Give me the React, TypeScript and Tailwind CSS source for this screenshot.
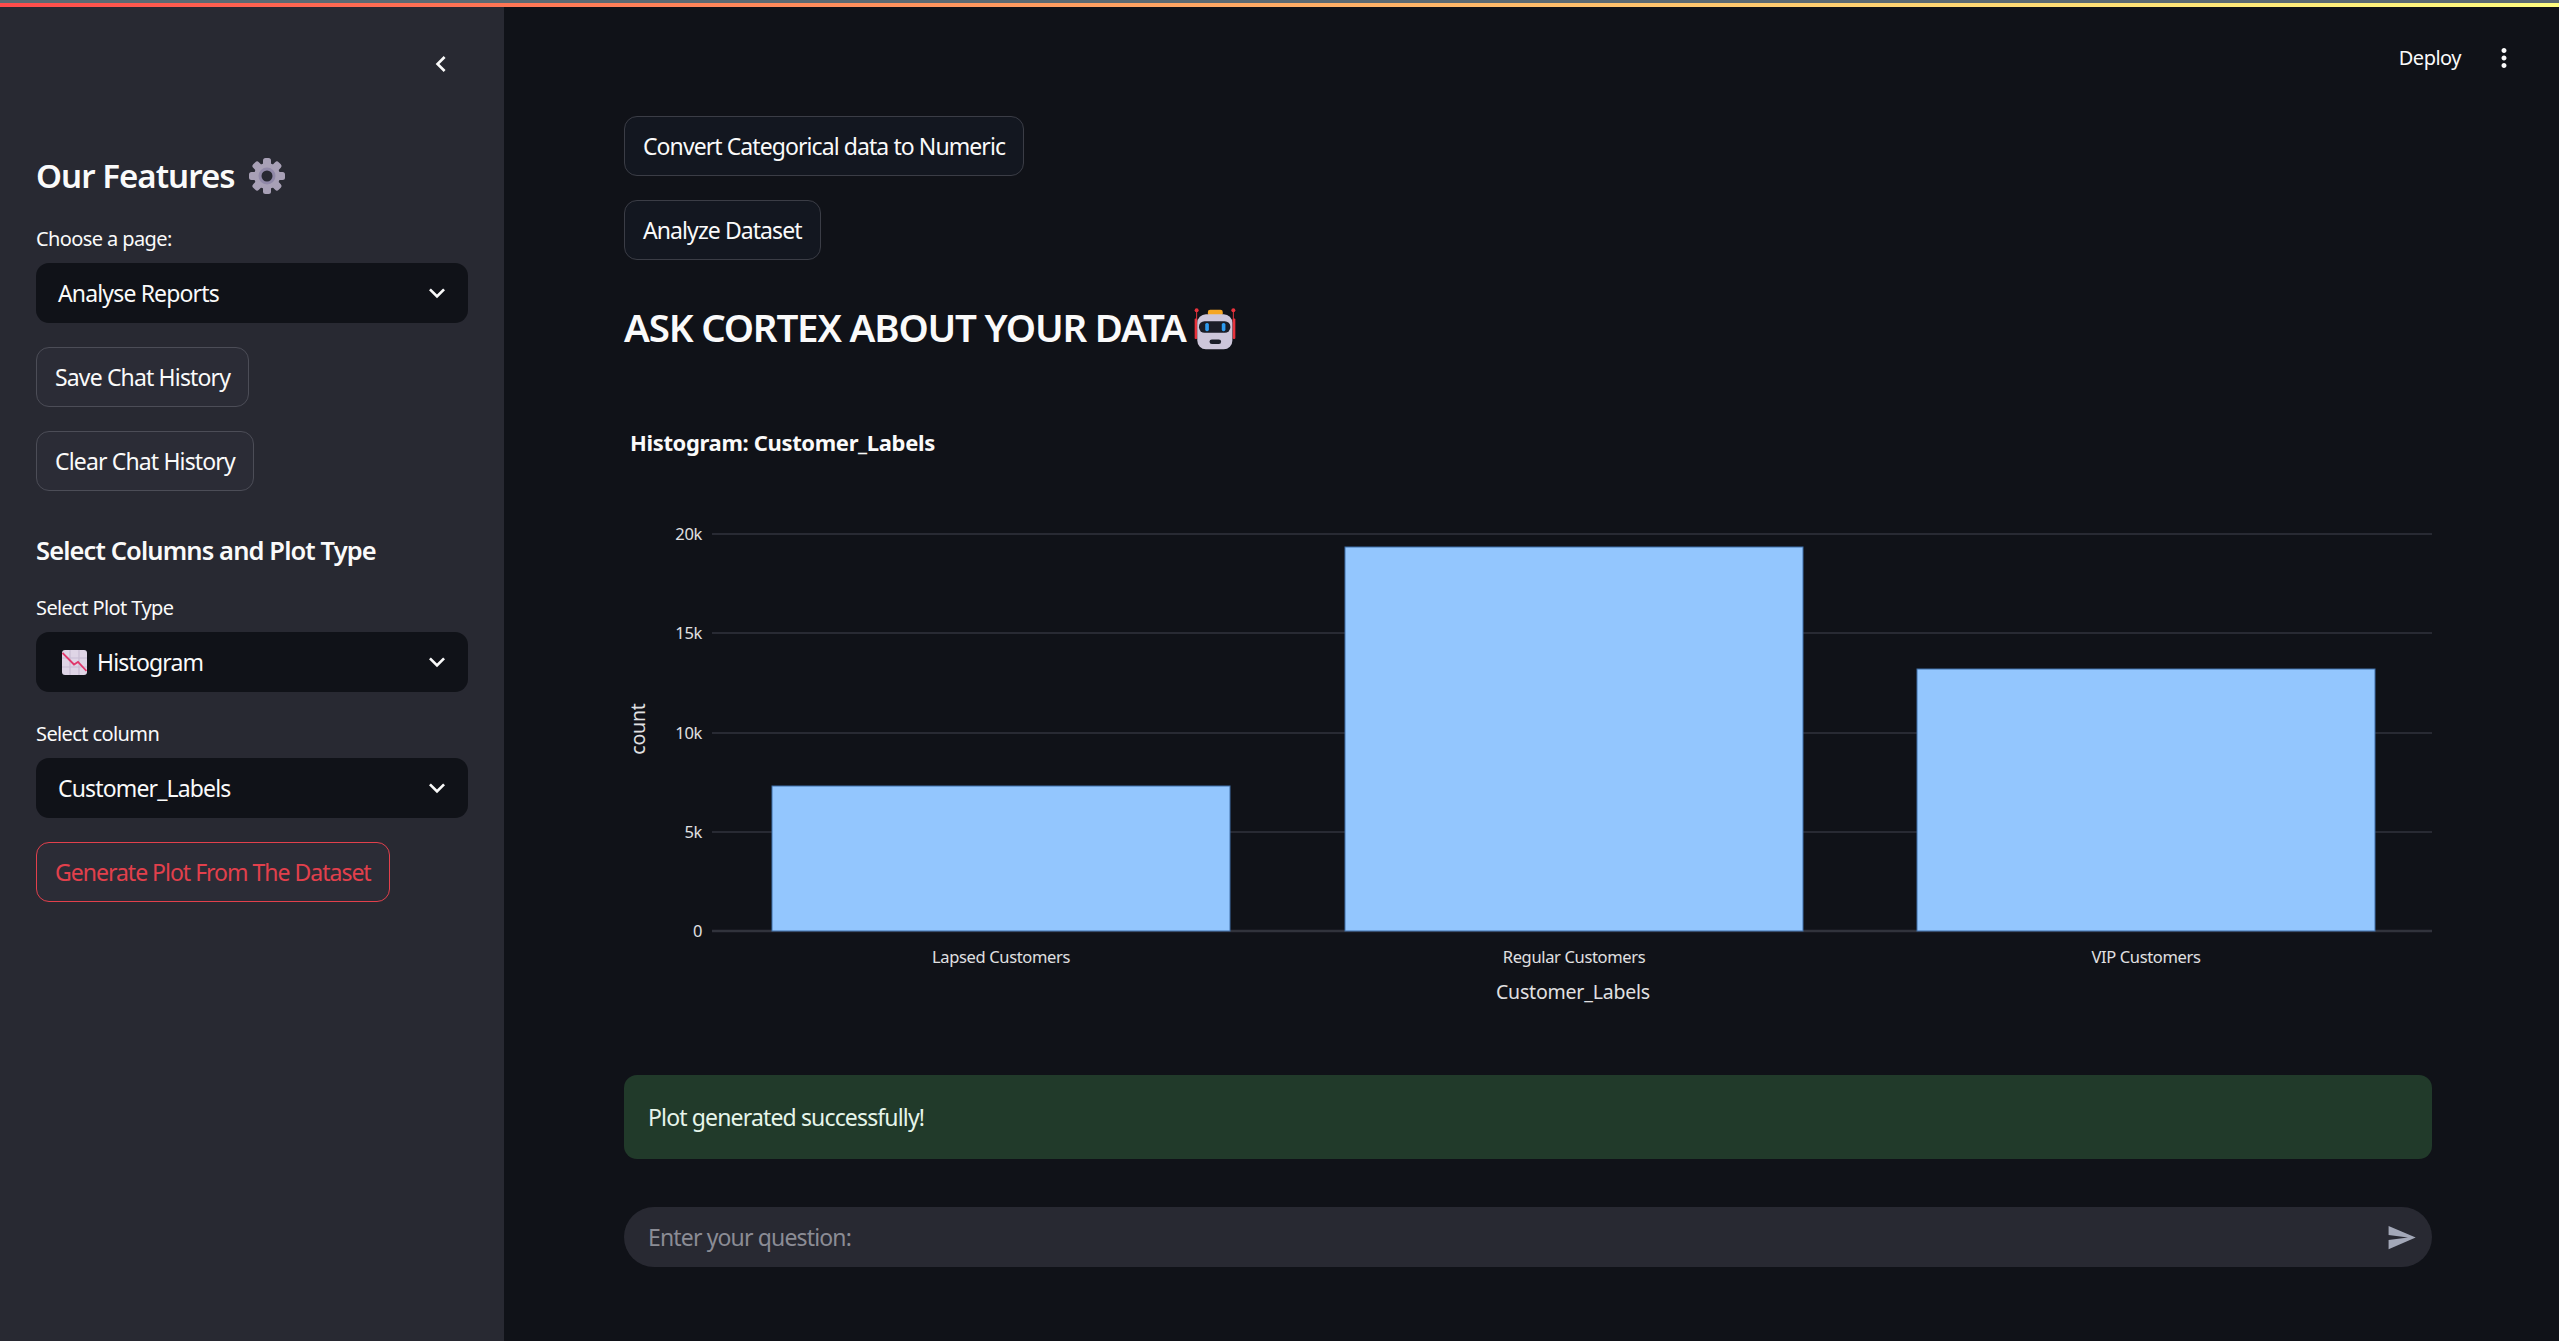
import { ComponentProps } from "react";

const BARS = [
  { label: "Lapsed Customers", x: 148, top: 386 },
  { label: "Regular Customers", x: 721, top: 147 },
  { label: "VIP Customers", x: 1293, top: 269 },
];

const TICKS = [
  { label: "20k", y: 134 },
  { label: "15k", y: 233 },
  { label: "10k", y: 333 },
  { label: "5k", y: 432 },
  { label: "0", y: 531 },
];

const TEETH = [0, 45, 90, 135, 180, 225, 270, 315];

export default function App() {
  return (
    <div className="flex h-screen w-full flex-col overflow-hidden bg-[#101218] font-['Noto_Sans',sans-serif] text-[#fafafa]">
      <div className="h-[3px] bg-[#5b6972]" />
      <div className="h-[4px] bg-gradient-to-r from-[#ff4b4b] to-[#fffd80]" />
      <div className="flex flex-1">
        <Sidebar />
        <Main />
      </div>
    </div>
  );
}

function Sidebar() {
  return (
    <aside className="flex w-[504px] flex-col bg-[#282932] px-9">
      <div className="flex h-[143px] items-start justify-end pt-[41px] pr-[11px]">
        <svg viewBox="0 0 24 24" className="size-8 fill-[#fafafa]">
          <path d="M15.41 7.41L14 6l-6 6 6 6 1.41-1.41L10.83 12z" />
        </svg>
      </div>
      <div className="flex h-[52px] items-center gap-[14px]">
        <h2 className="text-[33px] font-semibold tracking-[-0.95px]">Our Features</h2>
        <GearIcon />
      </div>
      <FieldLabel className="mt-[25px]">Choose a page:</FieldLabel>
      <Select>Analyse Reports</Select>
      <SidebarButton className="mt-6">Save Chat History</SidebarButton>
      <SidebarButton className="mt-6">Clear Chat History</SidebarButton>
      <h3 className="mt-[39px] flex h-10 items-center text-[25.5px] font-semibold tracking-[-0.88px]">
        Select Columns and Plot Type
      </h3>
      <FieldLabel className="mt-[26px]">Select Plot Type</FieldLabel>
      <Select icon={<ChartIcon />}>Histogram</Select>
      <FieldLabel className="mt-[30px]">Select column</FieldLabel>
      <Select>Customer_Labels</Select>
      <button className="mt-6 flex h-[60px] w-fit items-center rounded-[13px] border border-[#e2404c] bg-[#2b2c36] px-[18px] text-[23px] tracking-[-1px] text-[#e2404c]">
        Generate Plot From The Dataset
      </button>
    </aside>
  );
}

function FieldLabel({ className, children }: ComponentProps<"label">) {
  return (
    <label className={`flex h-6 items-center text-[20px] tracking-[-0.6px] ${className}`}>
      {children}
    </label>
  );
}

function Select({ icon, children }: { icon?: React.ReactNode; children: React.ReactNode }) {
  return (
    <div className="mt-3 flex h-[60px] items-center justify-between rounded-[13px] bg-[#101218] pr-[15px] pl-[22px]">
      <span className="flex items-center text-[23px] tracking-[-0.85px]">
        {icon}
        {children}
      </span>
      <svg viewBox="0 0 24 24" className="size-8 fill-[#fafafa]">
        <path d="M16.59 8.59L12 13.17 7.41 8.59 6 10l6 6 6-6z" />
      </svg>
    </div>
  );
}

function SidebarButton({ className, children }: ComponentProps<"button">) {
  return (
    <button
      className={`flex h-[60px] w-fit items-center rounded-[13px] border border-[#4c4d57] bg-[#2b2c36] px-[18px] text-[23px] tracking-[-0.85px] ${className}`}
    >
      {children}
    </button>
  );
}

function Main() {
  return (
    <main className="flex flex-1 flex-col">
      <header className="flex h-[109px] items-start justify-end gap-[28px] pt-[36px] pr-[40px]">
        <span className="flex h-[30px] items-center text-[20px] tracking-[-0.5px]">Deploy</span>
        <svg viewBox="0 0 24 24" className="size-[30px] fill-[#fafafa]">
          <path d="M12 8c1.1 0 2-.9 2-2s-.9-2-2-2-2 .9-2 2 .9 2 2 2zm0 2c-1.1 0-2 .9-2 2s.9 2 2 2 2-.9 2-2-.9-2-2-2zm0 6c-1.1 0-2 .9-2 2s.9 2 2 2 2-.9 2-2-.9-2-2-2z" />
        </svg>
      </header>
      <div className="mr-[127px] ml-[120px] flex flex-col">
        <MainButton>Convert Categorical data to Numeric</MainButton>
        <MainButton className="mt-6">Analyze Dataset</MainButton>
        <h1 className="mt-[38px] flex h-[60px] items-center text-[38.5px] font-semibold tracking-[-1.2px]">
          ASK CORTEX ABOUT YOUR DATA
          <RobotIcon />
        </h1>
        <Chart />
        <div className="mt-[35px] flex h-[84px] items-center rounded-[13px] bg-[#213a2a] px-6 text-[23px] tracking-[-0.85px] text-[#e6f5ea]">
          Plot generated successfully!
        </div>
        <div className="mt-12 flex h-[60px] items-center justify-between rounded-[30px] bg-[#282932] pr-[15px] pl-6">
          <span className="text-[23px] tracking-[-0.85px] text-[#8b8c95]">Enter your question:</span>
          <svg viewBox="0 0 24 24" className="size-[31px] fill-[#a3a8b8]">
            <path d="M2.01 21L23 12 2.01 3 2 10l15 2-15 2z" />
          </svg>
        </div>
      </div>
    </main>
  );
}

function MainButton({ className, children }: ComponentProps<"button">) {
  return (
    <button
      className={`flex h-[60px] w-fit items-center rounded-[13px] border border-[#3b3d46] bg-[#131720] px-[18px] text-[23px] tracking-[-0.92px] ${className}`}
    >
      {children}
    </button>
  );
}

function Chart() {
  return (
    <svg viewBox="0 0 1808 640" className="mt-[42px] h-[640px] w-[1808px]">
      <text x="6" y="51" className="fill-[#fafafa] text-[22px] font-bold tracking-[-0.35px]">
        Histogram: Customer_Labels
      </text>
      {TICKS.map((tick) => (
        <g key={tick.label}>
          <line
            x1="88"
            x2="1808"
            y1={tick.y}
            y2={tick.y}
            stroke="#31333c"
            strokeWidth={tick.label === "0" ? 2.5 : 1.6}
          />
          <text
            x="78"
            y={tick.y + 6}
            textAnchor="end"
            className="fill-[#e0e0e2] text-[16.5px] tracking-[-0.35px]"
          >
            {tick.label}
          </text>
        </g>
      ))}
      {BARS.map((bar) => (
        <g key={bar.label}>
          <rect
            x={bar.x}
            y={bar.top}
            width="458"
            height={531 - bar.top}
            fill="#93c6fe"
            stroke="#3f6fa8"
            strokeWidth="1"
          />
          <text
            x={bar.x + 229}
            y="563"
            textAnchor="middle"
            className="fill-[#e0e0e2] text-[16.5px] tracking-[-0.35px]"
          >
            {bar.label}
          </text>
        </g>
      ))}
      <text
        transform="translate(21 329) rotate(-90)"
        textAnchor="middle"
        className="fill-[#e0e0e2] text-[19.5px] tracking-[-0.2px]"
      >
        count
      </text>
      <text
        x="949"
        y="599"
        textAnchor="middle"
        className="fill-[#e0e0e2] text-[19.5px] tracking-[-0.2px]"
      >
        Customer_Labels
      </text>
    </svg>
  );
}

function GearIcon() {
  return (
    <svg viewBox="0 0 36 36" className="size-9">
      {TEETH.map((angle) => (
        <rect
          key={angle}
          x="14"
          y="0"
          width="8"
          height="10"
          rx="2.5"
          fill="#a8a0b6"
          transform={`rotate(${angle} 18 18)`}
        />
      ))}
      <circle cx="18" cy="18" r="13" fill="#a8a0b6" />
      <circle cx="18" cy="18" r="8.5" fill="#9189a8" />
      <circle cx="18" cy="18" r="5.5" fill="#282932" />
    </svg>
  );
}

function ChartIcon() {
  return (
    <svg viewBox="0 0 25 25" className="mr-[10px] ml-1 size-[25px]">
      <rect width="25" height="25" rx="3" fill="#dfd5e6" />
      <path d="M8 0V25M17 0V25M0 8H25M0 17H25" stroke="#c8bcd3" strokeWidth="1.2" />
      <path d="M0.5 3L12 14.5L16 12L24.5 21" fill="none" stroke="#e0386b" strokeWidth="1.8" />
    </svg>
  );
}

function RobotIcon() {
  return (
    <svg viewBox="130 45 130 130" className="ml-[7px] size-[43px]">
      <path d="M141 55V115M252 55V115" stroke="#e8323c" strokeWidth="3" />
      <circle cx="141" cy="55" r="6" fill="#e8323c" />
      <circle cx="252" cy="55" r="6" fill="#e8323c" />
      <rect x="135" y="80" width="8" height="62" rx="3" fill="#e8323c" />
      <rect x="250" y="80" width="8" height="62" rx="3" fill="#e8323c" />
      <rect x="175" y="53" width="45" height="18" rx="7" fill="#f5a623" />
      <rect x="143" y="67" width="106" height="106" rx="26" fill="#cdc6da" />
      <rect x="148" y="88" width="95" height="35" rx="17" fill="#1b1d27" />
      <rect x="167" y="93" width="11" height="25" rx="5" fill="#2e9bef" />
      <rect x="217" y="93" width="11" height="25" rx="5" fill="#2e9bef" />
      <rect x="180" y="143" width="35" height="14" rx="7" fill="#1b1d27" />
    </svg>
  );
}
